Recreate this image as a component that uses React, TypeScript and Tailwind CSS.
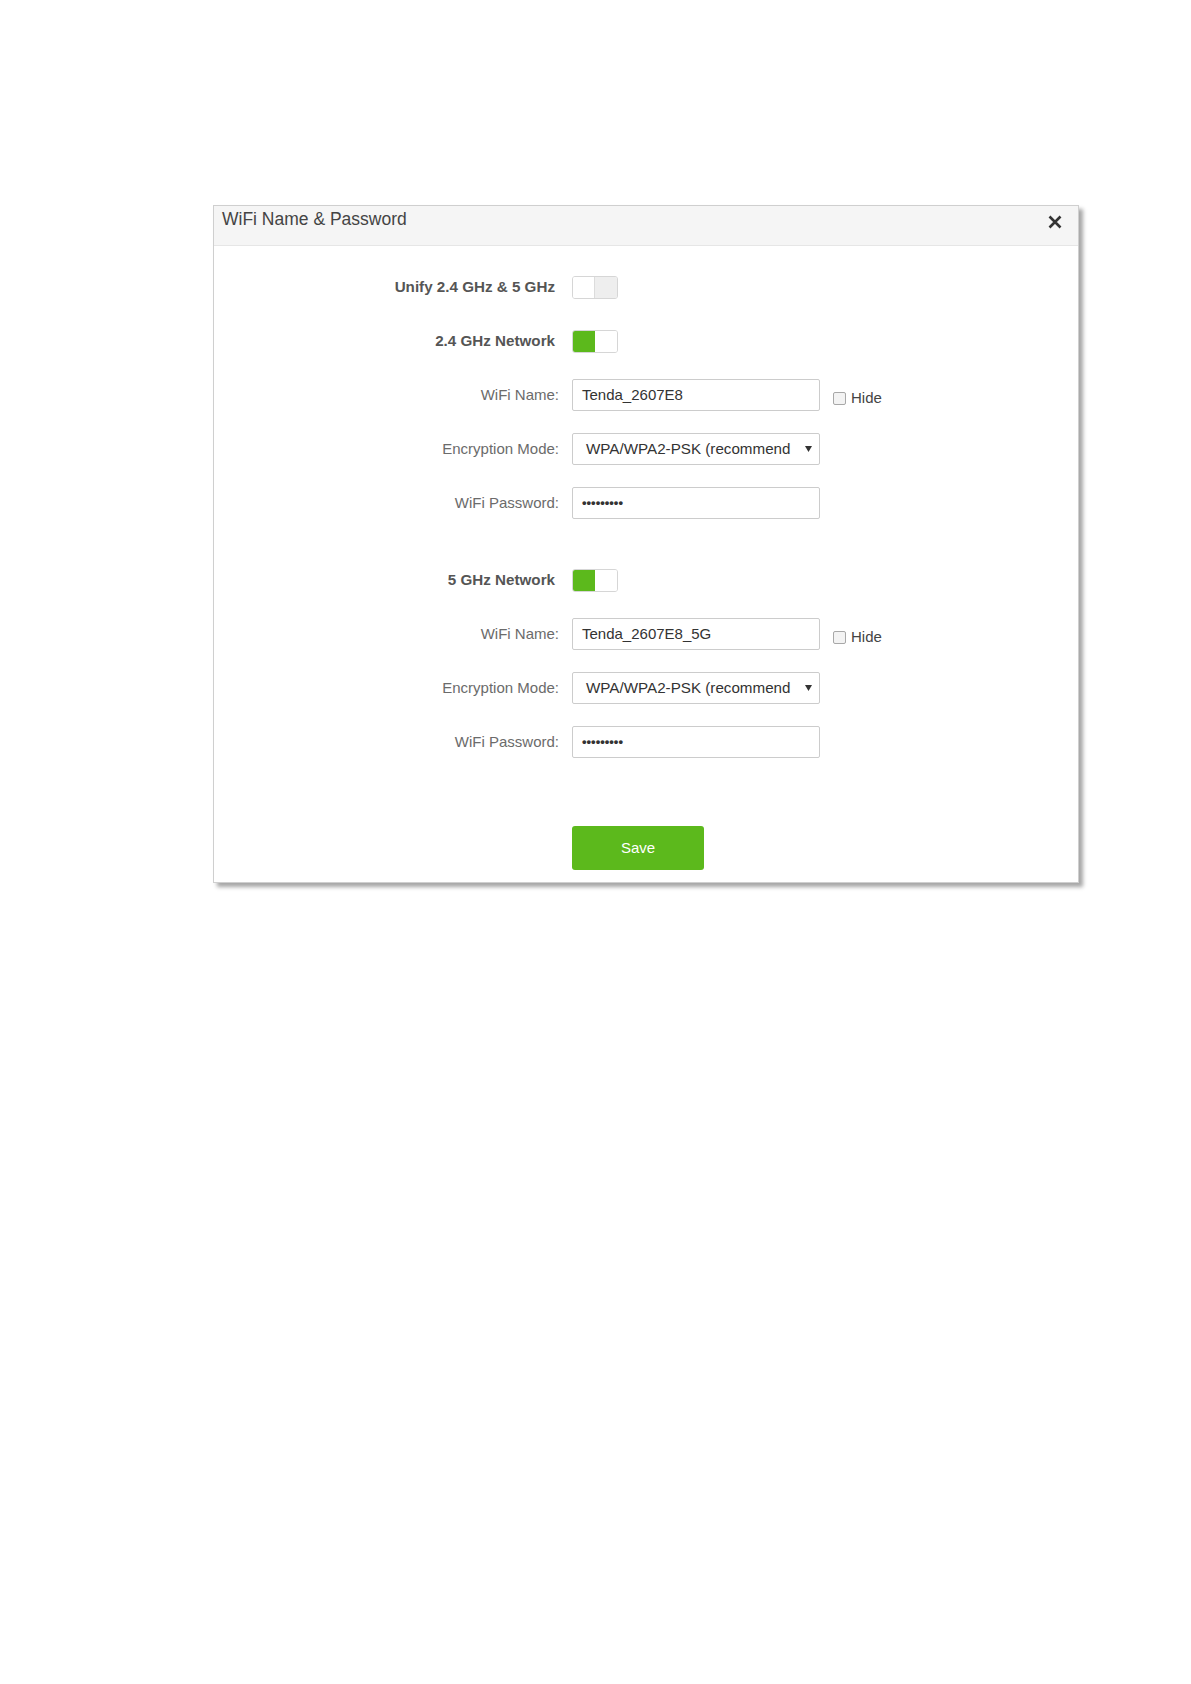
import React from "react";

const font = { fontFamily: '"Liberation Sans", Arial, sans-serif' };

function Toggle({ on }: { on: boolean }) {
  return (
    <div className="flex h-[23px] w-[46px] overflow-hidden rounded-[3px] border border-[#d6d6d6]">
      {on ? (
        <>
          <div className="h-full w-[22px] bg-[#5cb91c]" />
          <div className="h-full flex-1 bg-white" />
        </>
      ) : (
        <>
          <div className="h-full w-[22px] border-r border-[#dcdcdc] bg-white" />
          <div className="h-full flex-1 bg-[#eeeeee]" />
        </>
      )}
    </div>
  );
}

function BoldRow({ label, on }: { label: string; on: boolean }) {
  return (
    <div className="flex h-[54px] items-center">
      <div className="w-[345px] pr-[4px] text-right text-[15.2px] font-bold text-[#555555]">{label}</div>
      <div className="ml-[13px]">
        <Toggle on={on} />
      </div>
    </div>
  );
}

function Label({ children }: { children: React.ReactNode }) {
  return <div className="w-[345px] text-right text-[15px] text-[#6b6b6b]">{children}</div>;
}

function NameRow({ value }: { value: string }) {
  return (
    <div className="flex h-[54px] items-center">
      <Label>WiFi Name:</Label>
      <div className="ml-[13px] flex h-[32px] w-[248px] items-center rounded-[2px] border border-[#cccccc] bg-white pl-[9px] text-[15px] text-[#333333]">
        {value}
      </div>
      <div className="ml-[13px] mt-[7px] flex items-center">
        <div className="h-[13px] w-[13px] rounded-[2px] border border-[#a8a8a8] bg-[#f3f3f3]" />
        <span className="ml-[5px] text-[15px] text-[#444444]">Hide</span>
      </div>
    </div>
  );
}

function ModeRow() {
  return (
    <div className="flex h-[54px] items-center">
      <Label>Encryption Mode:</Label>
      <div className="ml-[13px] flex h-[32px] w-[248px] items-center justify-between rounded-[2px] border border-[#cccccc] bg-white pl-[13px] pr-[7px] text-[15.2px] text-[#333333]">
        <span>WPA/WPA2-PSK (recommend</span>
        <svg width="7" height="6" viewBox="0 0 7 6">
          <path d="M0 0 L7 0 L3.5 6 Z" fill="#333333" />
        </svg>
      </div>
    </div>
  );
}

function PasswordRow() {
  return (
    <div className="flex h-[54px] items-center">
      <Label>WiFi Password:</Label>
      <div className="ml-[13px] flex h-[32px] w-[248px] items-center rounded-[2px] border border-[#cccccc] bg-white pl-[9px] text-[13px] font-bold text-[#333333]">
        •••••••••
      </div>
    </div>
  );
}

export default function App() {
  return (
    <div className="min-h-[1684px] w-full bg-white" style={font}>
      <div className="pl-[213px] pt-[205px]">
        <div className="w-[866px] border border-[#cfcfcf] bg-white shadow-[4px_4px_4px_rgba(0,0,0,0.35)]">
          <div className="flex h-[40px] items-start justify-between border-b border-[#e6e6e6] bg-[#f5f5f5] pl-[8px] pr-[16px] pt-[3px]">
            <div className="text-[17.5px] leading-[20px] text-[#444444]">WiFi Name &amp; Password</div>
            <svg className="mt-[6px]" width="14" height="14" viewBox="0 0 14 14">
              <path d="M1.5 1.5 L12.5 12.5 M12.5 1.5 L1.5 12.5" stroke="#333333" strokeWidth="2.6" strokeLinecap="butt" />
            </svg>
          </div>
          <div className="pb-[12px] pt-[14px]">
            <BoldRow label="Unify 2.4 GHz & 5 GHz" on={false} />
            <BoldRow label="2.4 GHz Network" on={true} />
            <NameRow value="Tenda_2607E8" />
            <ModeRow />
            <PasswordRow />
            <div className="mt-[23px]">
              <BoldRow label="5 GHz Network" on={true} />
              <NameRow value="Tenda_2607E8_5G" />
              <ModeRow />
              <PasswordRow />
            </div>
            <div className="mt-[57px] pl-[358px]">
              <button className="flex h-[44px] w-[132px] items-center justify-center rounded-[3px] bg-[#5cb91c] text-[15px] text-white">
                Save
              </button>
            </div>
          </div>
        </div>
      </div>
    </div>
  );
}
